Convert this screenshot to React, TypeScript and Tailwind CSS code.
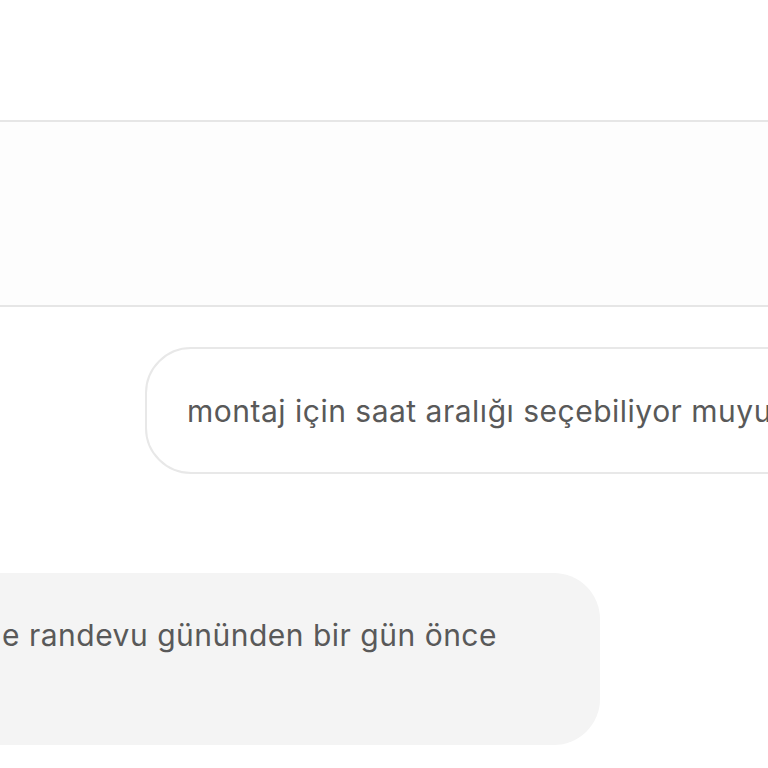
import React from "react";

export default function App() {
  return (
    <div
      className="w-[768px] h-[768px] overflow-hidden bg-white text-[#595959]"
      style={{ fontFamily: "Inter, 'Noto Sans', sans-serif" }}
    >
      <div className="h-[120px]" />
      <div className="h-[187px] border-y-2 border-[#e6e6e6] bg-[#fdfdfd]" />
      <div className="h-[40px]" />
      <div className="flex justify-start pl-[145px]">
        <div className="h-[127px] w-[800px] shrink-0 flex items-center rounded-[46px] border-2 border-[#e8e8e8] bg-white pl-[40px] whitespace-nowrap text-[30px] tracking-[0.5px] leading-[40px]">
          montaj için saat aralığı seçebiliyor muyum?
        </div>
      </div>
      <div className="h-[99px]" />
      <div className="flex justify-start ml-[-500px]">
        <div className="h-[172px] w-[1100px] shrink-0 rounded-[46px] bg-[#f4f4f4] pt-[42px] pr-[103px] flex justify-end whitespace-nowrap text-[30px] tracking-[0.5px] leading-[40px]">
          Kurulum ekibimiz sizinle randevu gününden bir gün önce
        </div>
      </div>
    </div>
  );
}
